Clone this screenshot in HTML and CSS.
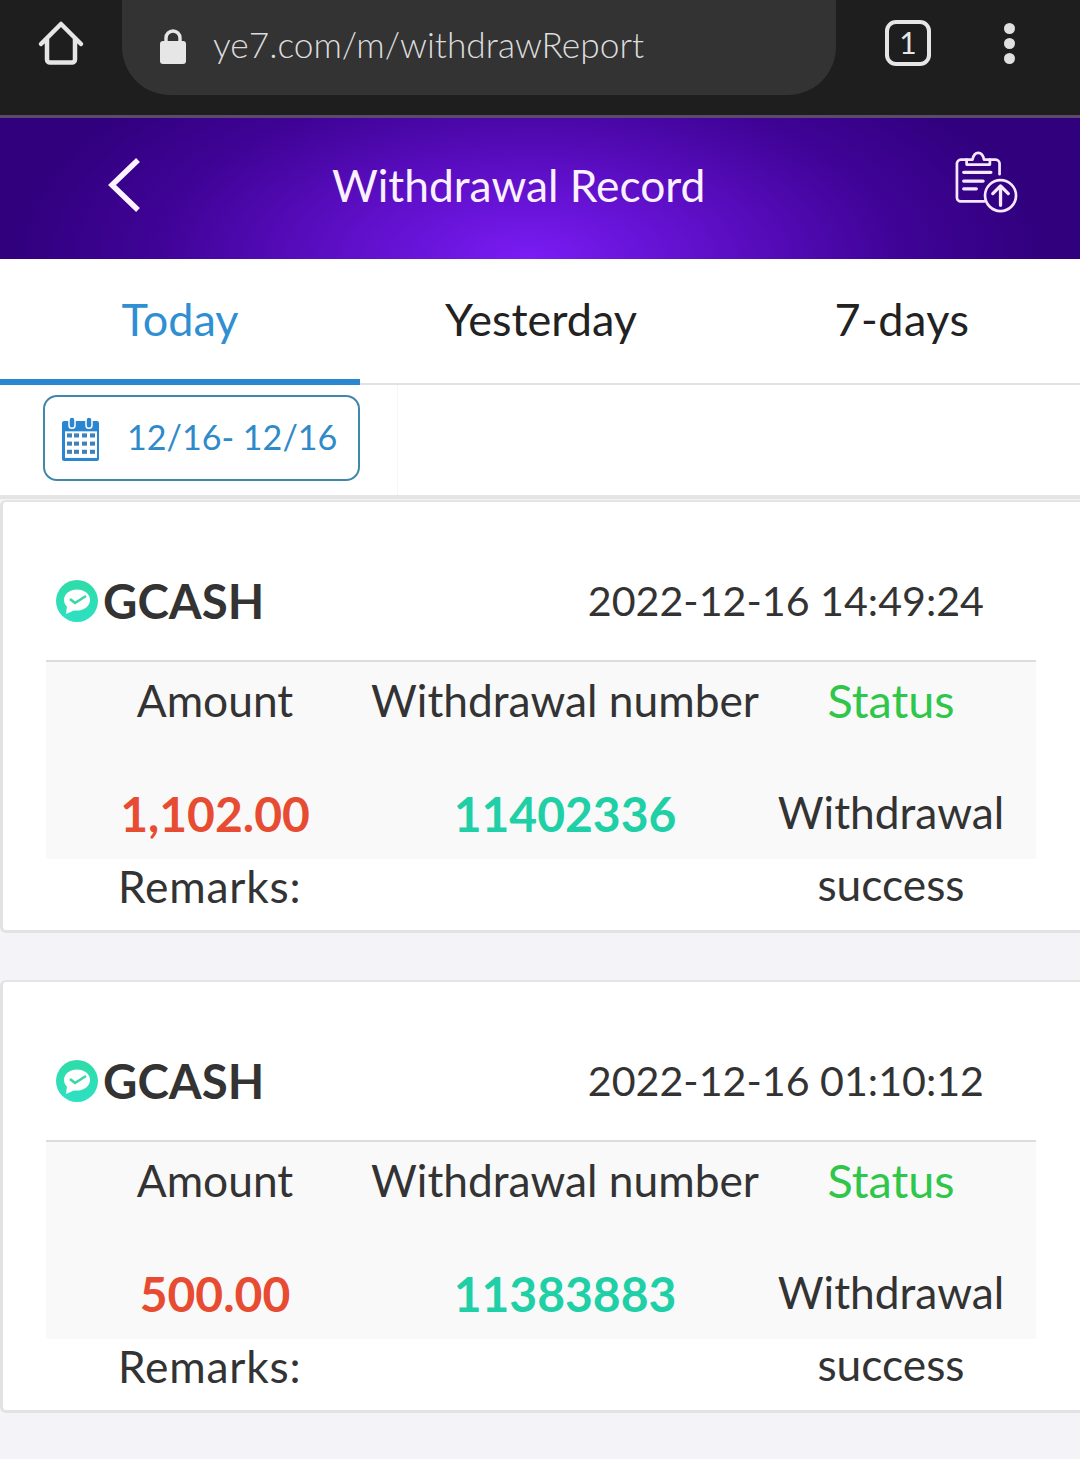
FILE: index.html
```html
<!DOCTYPE html>
<html lang="en">
<head>
<meta charset="utf-8">
<title>Withdrawal Record</title>
<link rel="stylesheet" href="styles.css">
</head>
<body>
<div class="browser">
  <svg class="home-icon" width="48" height="48" viewBox="0 0 48 48" fill="none"><path d="M4 24 24 4 44 24M10 19V39.5a3 3 0 0 0 3 3H35a3 3 0 0 0 3-3V19" stroke="#e6e6e6" stroke-width="4.5" stroke-linecap="round" stroke-linejoin="round"/></svg>
  <div class="address">
    <svg class="lock-icon" width="28" height="37" viewBox="0 0 28 37"><path d="M7 16V10a7 7 0 0 1 14 0v6" fill="none" stroke="#e6e6e6" stroke-width="3.4"/><rect x="1" y="13" width="26" height="23" rx="3" fill="#e6e6e6"/></svg>
    <span class="url">ye7.com/m/withdrawReport</span>
  </div>
  <div class="tab-count">1</div>
  <div class="menu-dots"><i></i><i></i><i></i></div>
</div>
<header class="title-bar">
  <svg class="back-icon" width="34" height="56" viewBox="0 0 34 56" fill="none"><path d="M31 3 5 28 31 53" stroke="#fdf2ff" stroke-width="5.5"/></svg>
  <h1 class="title">Withdrawal Record</h1>
  <svg class="report-icon" width="64" height="62" viewBox="0 0 66 64" fill="none" stroke="#f6e8ff" stroke-width="2.8" stroke-linecap="round" stroke-linejoin="round"><path d="M13 9H7a4 4 0 0 0-4 4V48a4 4 0 0 0 4 4H31M37 9h6a4 4 0 0 1 4 4v11"/><path d="M13 14V9h6c1-5 3-7 6-7s5 2 6 7h6v5Z"/><path d="M10 22H38M10 31H30M10 39H23" stroke-width="3.4"/><circle cx="48" cy="46" r="16"/><path d="M48 56V37M40 44l8-8 8 8" stroke-width="3.4"/></svg>
</header>
<nav class="tabs">
  <a class="tab tab-active">Today</a>
  <a class="tab">Yesterday</a>
  <a class="tab">7-days</a>
</nav>
<div class="date-row">
  <div class="date-cell">
    <div class="date-btn">
      <svg class="cal-icon" width="40" height="45" viewBox="0 0 40 44" preserveAspectRatio="none"><path d="M3 5H36a2 2 0 0 1 2 2V42a2 2 0 0 1-2 2H3a2 2 0 0 1-2-2V7a2 2 0 0 1 2-2Z" fill="#2a86d0"/><rect x="8" y="1" width="6" height="11" rx="3" fill="#2a86d0" stroke="#fff" stroke-width="1.5"/><rect x="25" y="1" width="6" height="11" rx="3" fill="#2a86d0" stroke="#fff" stroke-width="1.5"/><rect x="4" y="15" width="32" height="26" fill="#fff"/><g fill="#3d83bd"><rect x="6" y="17" width="5" height="4"/><rect x="13" y="17" width="5" height="4"/><rect x="21" y="17" width="5" height="4"/><rect x="29" y="17" width="5" height="4"/><rect x="6" y="25" width="5" height="4"/><rect x="13" y="25" width="5" height="4"/><rect x="21" y="25" width="5" height="4"/><rect x="29" y="25" width="5" height="4"/><rect x="6" y="33" width="5" height="4"/><rect x="13" y="33" width="5" height="4"/><rect x="21" y="33" width="5" height="4"/><rect x="29" y="33" width="5" height="4"/></g></svg>
      <span class="date-text">12/16- 12/16</span>
    </div>
  </div>
</div>
<main class="list">
  <article class="card">
    <div class="card-head">
      <div class="brand">
        <svg class="gcash-icon" width="42" height="42" viewBox="0 0 42 42"><defs><linearGradient id="g1" x1="0" y1="0" x2="0" y2="1"><stop offset="0" stop-color="#2fdca6"/><stop offset="1" stop-color="#2ee0c4"/></linearGradient></defs><circle cx="21" cy="21" r="21" fill="url(#g1)"/><ellipse cx="21" cy="20" rx="13" ry="10.5" fill="#fff"/><path d="M11 26 10 34 19 30Z" fill="#fff"/><path d="M14 19l5 4 11-7" fill="none" stroke="#36d8a6" stroke-width="2.6"/></svg>
        <span class="brand-name">GCASH</span>
      </div>
      <time class="stamp">2022-12-16 14:49:24</time>
    </div>
    <div class="detail">
      <div class="detail-bg"></div>
      <div class="label cell-a">Amount</div>
      <div class="label cell-b">Withdrawal number</div>
      <div class="label status cell-c">Status</div>
      <div class="amount cell-a2">1,102.00</div>
      <div class="number cell-b2">11402336</div>
      <div class="result cell-c2">Withdrawal success</div>
      <div class="remarks">Remarks:</div>
    </div>
  </article>
  <article class="card">
    <div class="card-head">
      <div class="brand">
        <svg class="gcash-icon" width="42" height="42" viewBox="0 0 42 42"><circle cx="21" cy="21" r="21" fill="url(#g1)"/><ellipse cx="21" cy="20" rx="13" ry="10.5" fill="#fff"/><path d="M11 26 10 34 19 30Z" fill="#fff"/><path d="M14 19l5 4 11-7" fill="none" stroke="#36d8a6" stroke-width="2.6"/></svg>
        <span class="brand-name">GCASH</span>
      </div>
      <time class="stamp">2022-12-16 01:10:12</time>
    </div>
    <div class="detail">
      <div class="detail-bg"></div>
      <div class="label cell-a">Amount</div>
      <div class="label cell-b">Withdrawal number</div>
      <div class="label status cell-c">Status</div>
      <div class="amount cell-a2">500.00</div>
      <div class="number cell-b2">11383883</div>
      <div class="result cell-c2">Withdrawal success</div>
      <div class="remarks">Remarks:</div>
    </div>
  </article>
</main>
</body>
</html>
```
FILE: styles.css
```css
* { box-sizing: border-box; }
html, body { margin: 0; padding: 0; }
body {
  width: 1080px;
  height: 1459px;
  overflow: hidden;
  background: #f4f4f8;
  font-family: Lato, "Open Sans", sans-serif;
  color: #333;
}
.browser {
  height: 118px;
  background: #1e1e1e;
  border-bottom: 3px solid #5b4a68;
  display: flex;
  align-items: flex-start;
}
.home-icon { margin: 20px 0 0 37px; }
.address {
  width: 714px;
  height: 95px;
  margin-left: 37px;
  background: #333;
  border-radius: 0 0 48px 48px / 0 0 48px 48px;
  display: flex;
  align-items: center;
  padding-left: 37px;
}
.lock-icon { margin-top: -2px; }
.url {
  margin-left: 26px;
  margin-top: -5px;
  font-size: 35.3px;
  font-weight: 300;
  color: #dcdcdc;
  line-height: 1;
}
.tab-count {
  width: 46px;
  height: 46px;
  margin: 20px 0 0 49px;
  border: 4px solid #e6e6e6;
  border-radius: 11px;
  color: #e6e6e6;
  font-size: 30px;
  font-weight: 400;
  line-height: 37px;
  text-align: center;
}
.menu-dots {
  margin: 23px 0 0 73px;
  display: flex;
  flex-direction: column;
  gap: 4px;
}
.menu-dots i {
  display: block;
  width: 11px;
  height: 11px;
  border-radius: 50%;
  background: #e0e0e0;
}
.title-bar {
  height: 141px;
  background: radial-gradient(ellipse 520px 240px at 528px 141px, #7a1cf5 0%, #5c0ec4 38%, #3f0396 72%, #30007d 100%);
  background-color: #30007d;
  display: flex;
  align-items: center;
}
.back-icon { margin-left: 107px; margin-top: -7px; }
.title {
  margin: -7px 0 0 191px;
  font-size: 44.3px;
  font-weight: 400;
  color: #fbf0ff;
  line-height: 1;
  white-space: nowrap;
}
.report-icon { margin: -13px 62px 0 auto; }
.tabs {
  height: 126px;
  background: #fff;
  border-bottom: 2px solid #e2e2e2;
  display: flex;
}
.tab {
  width: 360px;
  height: 126px;
  padding-top: 36px;
  font-size: 45px;
  line-height: 48px;
  color: #222;
  text-align: center;
  border-bottom: 6px solid transparent;
}
.tab-active {
  color: #2f8fd2;
  border-bottom-color: #2a86d0;
}
.tab:nth-child(2) { padding-left: 2px; }
.tab:nth-child(3) { padding-left: 4px; letter-spacing: 0.5px; }
.date-row {
  height: 114px;
  background: #fff;
  border-bottom: 4px solid #e4e4e4;
}
.date-cell {
  width: 398px;
  height: 110px;
  padding: 10px 0 0 43px;
  border-right: 1px solid #f6f6f6;
}
.date-btn {
  width: 317px;
  height: 86px;
  border: 2px solid #3f87ab;
  border-radius: 14px;
  display: flex;
  align-items: center;
  padding-left: 16px;
}
.date-text {
  margin: -4px 0 0 26px;
  font-size: 34.1px;
  color: #2f8aca;
  white-space: nowrap;
}
.list {
  display: flex;
  flex-direction: column;
  gap: 47px;
  padding-top: 1px;
}
.card {
  height: 433px;
  background: #fff;
  border: 3px solid #e2e2e4;
  border-width: 0 0 3px 3px;
  border-top: 2px solid #e4e4e4;
  border-radius: 6px 0 0 6px;
}
.card-head {
  height: 160px;
  margin: 0 44px 0 43px;
  padding-top: 76px;
  border-bottom: 2px solid #dcdcdc;
  display: flex;
  align-items: flex-start;
  justify-content: space-between;
}
.brand {
  display: flex;
  align-items: center;
  padding-left: 10px;
}
.brand-name {
  margin-left: 5px;
  font-size: 47.4px;
  font-weight: 700;
  color: #333;
  line-height: 46px;
}
.stamp {
  margin: -1px 52px 0 0;
  font-size: 41.2px;
  line-height: 46px;
  color: #333;
}
.detail {
  display: grid;
  margin-left: 43px;
  width: 990px;
  grid-template-columns: 338px 362px 290px;
  grid-template-rows: 80px 117px 70px;
  font-size: 44.3px;
  text-align: center;
}
.detail-bg {
  grid-column: 1 / 4;
  grid-row: 1 / 3;
  background: #f9f9f9;
}
.label { padding-top: 15px; line-height: 46px; }
.cell-a { grid-area: 1 / 1; }
.cell-b { grid-area: 1 / 2; white-space: nowrap; justify-self: center; }
.cell-c { grid-area: 1 / 3; }
.status { color: #2fc64c; font-size: 46.8px; }
.amount, .number {
  padding-top: 48px;
  line-height: 48px;
  font-weight: 700;
  font-size: 48px;
}
.amount { grid-area: 2 / 1; color: #e74c32; }
.number { grid-area: 2 / 2; color: #1fcfa6; }
.result {
  grid-area: 2 / 3 / 4 / 3;
  padding-top: 34px;
  line-height: 72px;
}
.remarks {
  grid-area: 3 / 1;
  text-align: left;
  padding-left: 72px;
  line-height: 54px;
  letter-spacing: 0.8px;
}
```
